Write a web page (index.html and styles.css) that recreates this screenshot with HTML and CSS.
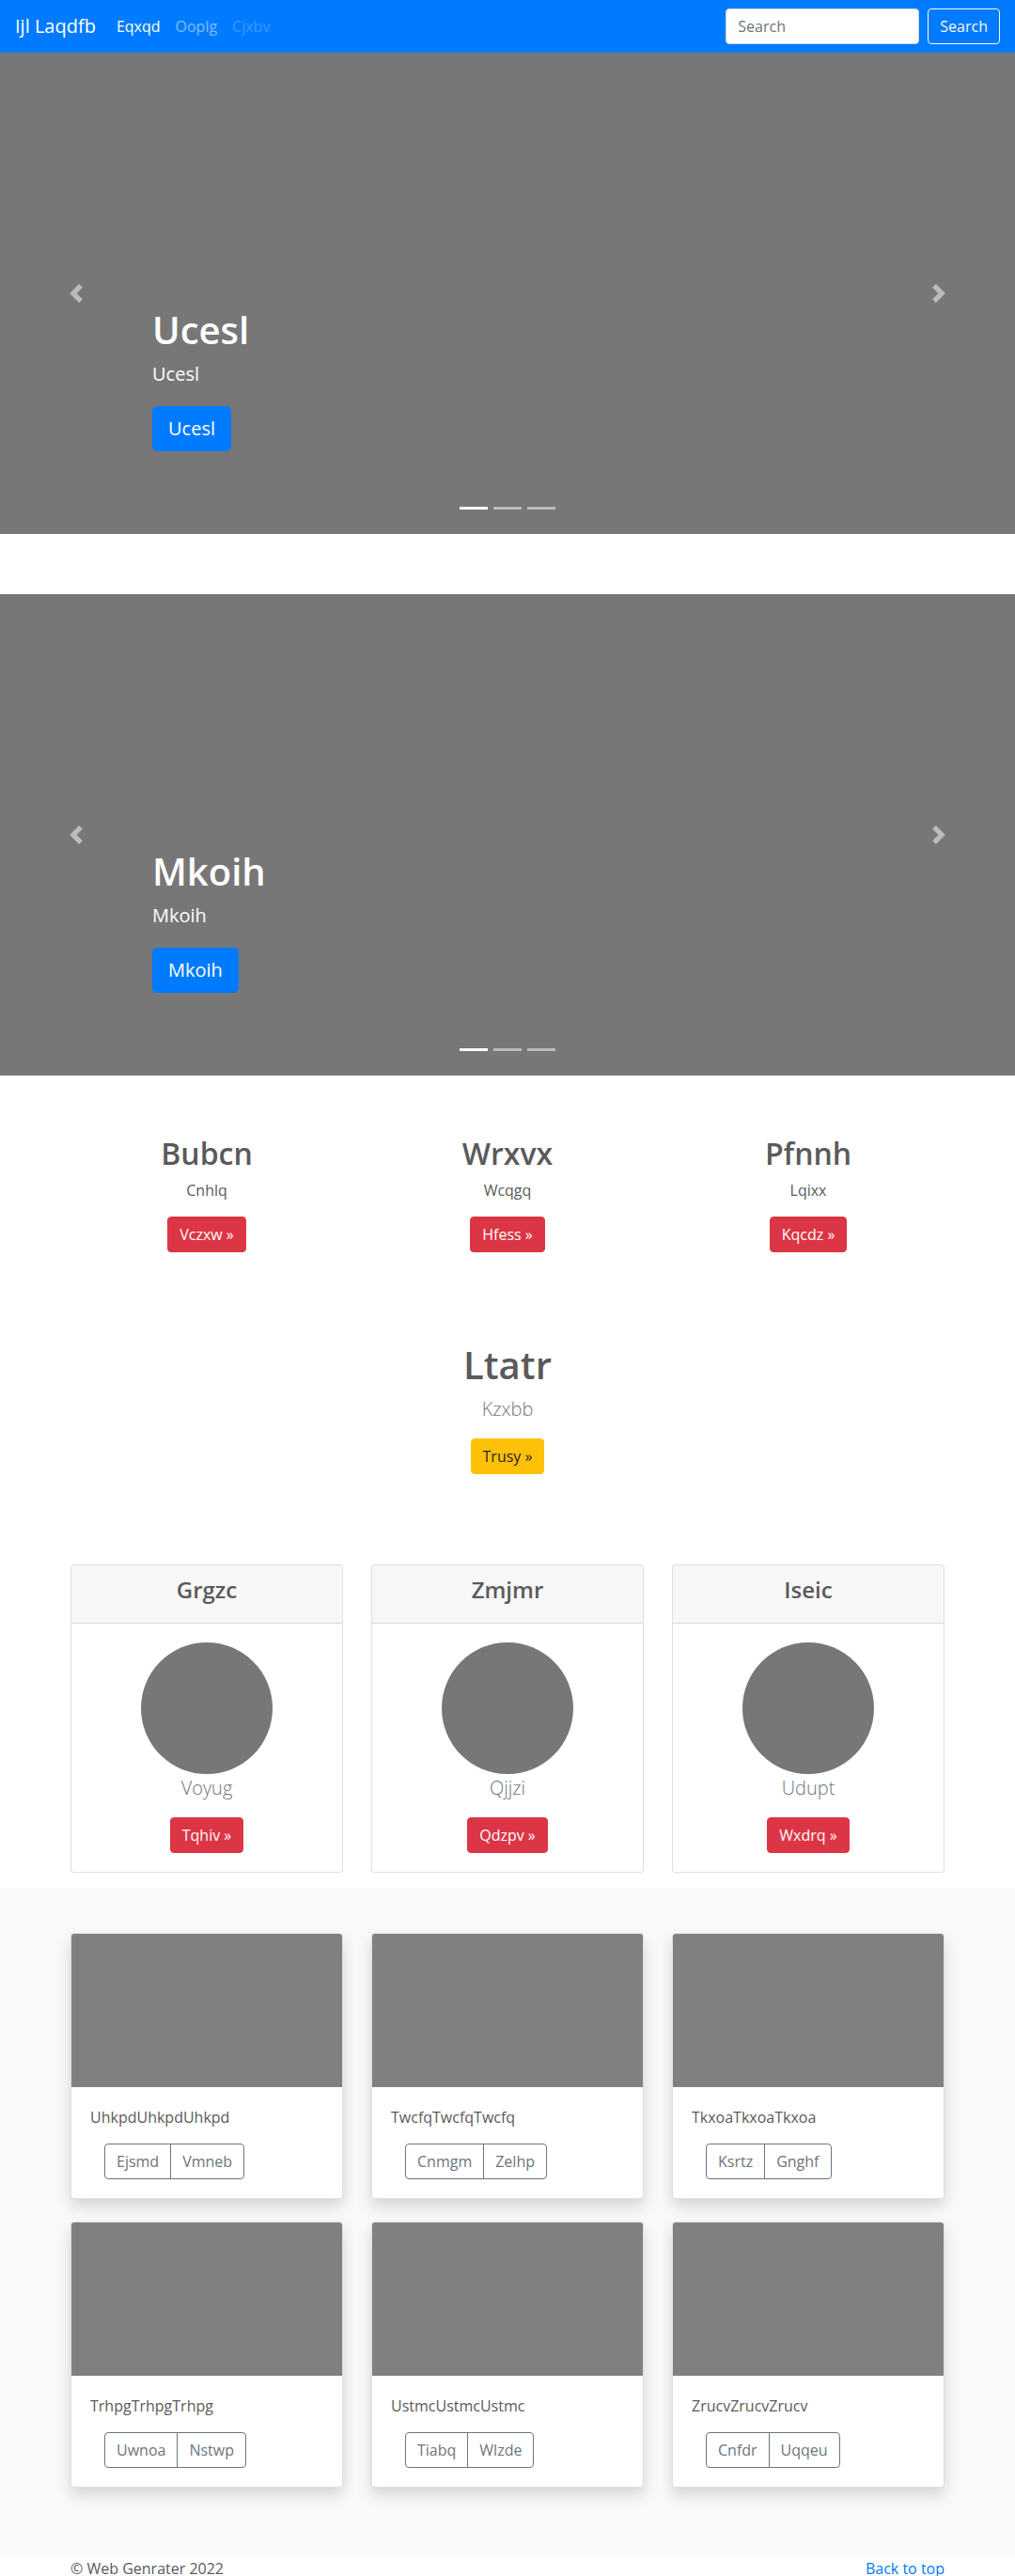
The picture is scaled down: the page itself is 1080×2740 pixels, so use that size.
FILE: index.html
```html
<!DOCTYPE html>
<html lang="en">
<head>
<meta charset="utf-8">
<title>Ijl Laqdfb</title>
<link rel="stylesheet" href="styles.css">
</head>
<body>
<nav class="navbar">
  <a class="brand" href="#">Ijl Laqdfb</a>
  <ul class="nav">
    <li><a class="nav-link active" href="#">Eqxqd</a></li>
    <li><a class="nav-link" href="#">Ooplg</a></li>
    <li><a class="nav-link disabled" href="#">Cjxbv</a></li>
  </ul>
  <form class="search">
    <input class="search-input" type="text" placeholder="Search">
    <button class="btn btn-outline-light" type="button">Search</button>
  </form>
</nav>

<div class="carousel">
  <div class="caption">
    <h1>Ucesl</h1>
    <p>Ucesl</p>
    <a class="btn btn-lg btn-primary" href="#">Ucesl</a>
  </div>
  <a class="ctrl prev" href="#"><svg width="20" height="20" viewBox="0 0 8 8"><path fill="#fff" d="M5.25 0l-4 4 4 4 1.5-1.5L4.25 4l2.5-2.5L5.25 0z"/></svg></a>
  <a class="ctrl next" href="#"><svg width="20" height="20" viewBox="0 0 8 8"><path fill="#fff" d="M2.75 0l-1.5 1.5L3.75 4l-2.5 2.5L2.75 8l4-4-4-4z"/></svg></a>
  <ol class="indicators"><li class="active"></li><li></li><li></li></ol>
</div>

<div class="carousel">
  <div class="caption">
    <h1>Mkoih</h1>
    <p>Mkoih</p>
    <a class="btn btn-lg btn-primary" href="#">Mkoih</a>
  </div>
  <a class="ctrl prev" href="#"><svg width="20" height="20" viewBox="0 0 8 8"><path fill="#fff" d="M5.25 0l-4 4 4 4 1.5-1.5L4.25 4l2.5-2.5L5.25 0z"/></svg></a>
  <a class="ctrl next" href="#"><svg width="20" height="20" viewBox="0 0 8 8"><path fill="#fff" d="M2.75 0l-1.5 1.5L3.75 4l-2.5 2.5L2.75 8l4-4-4-4z"/></svg></a>
  <ol class="indicators"><li class="active"></li><li></li><li></li></ol>
</div>

<div class="container">
  <div class="marketing">
    <div class="mcol">
      <h2>Bubcn</h2>
      <p>Cnhlq</p>
      <div class="btn-wrap"><a class="btn btn-danger" href="#">Vczxw &raquo;</a></div>
    </div>
    <div class="mcol">
      <h2>Wrxvx</h2>
      <p>Wcqgq</p>
      <div class="btn-wrap"><a class="btn btn-danger" href="#">Hfess &raquo;</a></div>
    </div>
    <div class="mcol">
      <h2>Pfnnh</h2>
      <p>Lqixx</p>
      <div class="btn-wrap"><a class="btn btn-danger" href="#">Kqcdz &raquo;</a></div>
    </div>
  </div>
</div>

<section class="hero">
  <h1>Ltatr</h1>
  <p class="lead text-muted">Kzxbb</p>
  <div class="btn-row"><a class="btn btn-warning" href="#">Trusy &raquo;</a></div>
</section>

<div class="container">
  <div class="deck">
    <div class="card pcard">
      <div class="card-header"><h4>Grgzc</h4></div>
      <div class="card-body">
        <div class="circle"></div>
        <p class="lead text-muted">Voyug</p>
        <a class="btn btn-danger" href="#">Tqhiv &raquo;</a>
      </div>
    </div>
    <div class="card pcard">
      <div class="card-header"><h4>Zmjmr</h4></div>
      <div class="card-body">
        <div class="circle"></div>
        <p class="lead text-muted">Qjjzi</p>
        <a class="btn btn-danger" href="#">Qdzpv &raquo;</a>
      </div>
    </div>
    <div class="card pcard">
      <div class="card-header"><h4>Iseic</h4></div>
      <div class="card-body">
        <div class="circle"></div>
        <p class="lead text-muted">Udupt</p>
        <a class="btn btn-danger" href="#">Wxdrq &raquo;</a>
      </div>
    </div>
  </div>
</div>

<section class="album">
  <div class="container">
    <div class="album-grid">
      <div class="card acard">
        <div class="thumb"></div>
        <div class="acard-body">
          <p class="card-text">UhkpdUhkpdUhkpd</p>
          <div class="btn-group"><a class="btn btn-outline-secondary" href="#">Ejsmd</a><a class="btn btn-outline-secondary" href="#">Vmneb</a></div>
        </div>
      </div>
      <div class="card acard">
        <div class="thumb"></div>
        <div class="acard-body">
          <p class="card-text">TwcfqTwcfqTwcfq</p>
          <div class="btn-group"><a class="btn btn-outline-secondary" href="#">Cnmgm</a><a class="btn btn-outline-secondary" href="#">Zelhp</a></div>
        </div>
      </div>
      <div class="card acard">
        <div class="thumb"></div>
        <div class="acard-body">
          <p class="card-text">TkxoaTkxoaTkxoa</p>
          <div class="btn-group"><a class="btn btn-outline-secondary" href="#">Ksrtz</a><a class="btn btn-outline-secondary" href="#">Gnghf</a></div>
        </div>
      </div>
      <div class="card acard">
        <div class="thumb"></div>
        <div class="acard-body">
          <p class="card-text">TrhpgTrhpgTrhpg</p>
          <div class="btn-group"><a class="btn btn-outline-secondary" href="#">Uwnoa</a><a class="btn btn-outline-secondary" href="#">Nstwp</a></div>
        </div>
      </div>
      <div class="card acard">
        <div class="thumb"></div>
        <div class="acard-body">
          <p class="card-text">UstmcUstmcUstmc</p>
          <div class="btn-group"><a class="btn btn-outline-secondary" href="#">Tiabq</a><a class="btn btn-outline-secondary" href="#">Wlzde</a></div>
        </div>
      </div>
      <div class="card acard">
        <div class="thumb"></div>
        <div class="acard-body">
          <p class="card-text">ZrucvZrucvZrucv</p>
          <div class="btn-group"><a class="btn btn-outline-secondary" href="#">Cnfdr</a><a class="btn btn-outline-secondary" href="#">Uqqeu</a></div>
        </div>
      </div>
    </div>
  </div>
</section>

<footer class="container footer">
  <p>&copy; Web Genrater 2022</p>
  <a href="#" class="top-link">Back to top</a>
</footer>
</body>
</html>
```

FILE: styles.css
```css
* { box-sizing: border-box; }

html, body {
  margin: 0;
  padding: 0;
}

body {
  font-family: "Open Sans", "Noto Sans", sans-serif;
  font-size: 16px;
  line-height: 1.5;
  color: #5a5a5a;
  background: #fff;
}

a { text-decoration: none; }

h1, h2, h4, p { margin: 0; }

/* Navbar */
.navbar {
  height: 56px;
  background: #007bff;
  display: flex;
  align-items: center;
  padding: 0 16px;
}

.brand {
  font-size: 20px;
  line-height: 30px;
  color: #fff;
  margin-right: 14px;
}

.nav {
  display: flex;
  list-style: none;
  margin: 0;
  padding: 0;
  flex: 1;
}

.nav-link {
  display: block;
  padding: 8px;
  color: rgba(255, 255, 255, 0.5);
}

.nav-link.active { color: #fff; }
.nav-link.disabled { color: rgba(255, 255, 255, 0.25); }

.search {
  display: flex;
  align-items: center;
}

.search-input {
  width: 206px;
  height: 38px;
  padding: 6px 12px;
  font-family: inherit;
  font-size: 16px;
  color: #495057;
  background: #fff;
  border: 1px solid #ced4da;
  border-radius: 4px;
  margin-right: 9px;
  outline: none;
}

.search-input::placeholder { color: #6c757d; }

/* Buttons */
.btn {
  display: inline-block;
  font-family: inherit;
  font-size: 16px;
  line-height: 24px;
  padding: 6px 12px;
  border: 1px solid transparent;
  border-radius: 4px;
  cursor: pointer;
  text-align: center;
}

.btn-lg {
  font-size: 20px;
  line-height: 30px;
  padding: 8px 16px;
  border-radius: 5px;
}

.btn-primary { background: #007bff; border-color: #007bff; color: #fff; }
.btn-danger { background: #dc3545; border-color: #dc3545; color: #fff; }
.btn-warning { background: #ffc107; border-color: #ffc107; color: #212529; }
.btn-outline-light { background: transparent; border-color: #f8f9fa; color: #f8f9fa; }
.btn-outline-secondary { background: transparent; border-color: #6c757d; color: #6c757d; }

/* Carousel */
.carousel {
  position: relative;
  height: 512px;
  background: #777;
  margin-bottom: 64px;
  overflow: hidden;
}

.caption {
  position: absolute;
  left: 15%;
  right: 15%;
  bottom: 88px;
  color: #fff;
  display: flex;
  flex-direction: column;
  align-items: flex-start;
}

.caption h1 {
  font-size: 40px;
  line-height: 48px;
  font-weight: 600;
  margin-bottom: 8px;
}

.caption p {
  font-size: 20px;
  line-height: 30px;
  margin-bottom: 19px;
}

.ctrl {
  position: absolute;
  top: 0;
  bottom: 0;
  width: 15%;
  display: flex;
  align-items: center;
  justify-content: center;
  opacity: 0.5;
}

.ctrl.prev { left: 0; }
.ctrl.next { right: 0; }

.indicators {
  position: absolute;
  left: 15%;
  right: 15%;
  bottom: 16px;
  margin: 0;
  padding: 0;
  list-style: none;
  display: flex;
  justify-content: center;
}

.indicators li {
  width: 30px;
  height: 23px;
  margin: 0 3px;
  border-top: 10px solid transparent;
  border-bottom: 10px solid transparent;
  background: #fff;
  background-clip: padding-box;
  opacity: 0.5;
}

.indicators li.active { opacity: 1; }

/* Container */
.container {
  width: 930px;
  margin: 0 auto;
}

/* Marketing */
.marketing {
  display: grid;
  grid-template-columns: repeat(3, 1fr);
  column-gap: 30px;
}

.mcol {
  text-align: center;
  margin-bottom: 24px;
}

.mcol h2 {
  font-size: 32px;
  line-height: 38.4px;
  font-weight: 600;
  margin-bottom: 8px;
}

.mcol p {
  margin: 0 12px 16px;
}

.btn-wrap {
  margin-bottom: 16px;
}

/* Hero */
.hero {
  text-align: center;
  padding: 56px 0 96px;
}

.hero h1 {
  font-size: 40px;
  line-height: 48px;
  font-weight: 600;
  margin-bottom: 8px;
}

.lead {
  font-size: 20px;
  line-height: 30px;
  font-weight: 300;
  margin-bottom: 16px;
}

.text-muted { color: #6c757d; }

/* Cards */
.card {
  background: #fff;
  border: 1px solid rgba(0, 0, 0, 0.125);
  border-radius: 4px;
}

.deck {
  display: grid;
  grid-template-columns: repeat(3, 1fr);
  column-gap: 30px;
  margin-bottom: 16px;
}

.pcard { text-align: center; }

.card-header {
  background: rgba(0, 0, 0, 0.03);
  border-bottom: 1px solid rgba(0, 0, 0, 0.125);
  padding: 12px 20px;
  border-radius: 3px 3px 0 0;
}

.card-header h4 {
  font-size: 24px;
  line-height: 28.8px;
  font-weight: 600;
  margin-bottom: 8px;
}

.card-body {
  padding: 20px;
}

.circle {
  width: 140px;
  height: 140px;
  border-radius: 50%;
  background: #777;
  margin: 0 auto;
}

/* Album */
.album {
  background: #f8f9fa;
  padding: 48px 0 72px;
}

.album-grid {
  display: grid;
  grid-template-columns: repeat(3, 1fr);
  column-gap: 30px;
  row-gap: 24px;
}

.acard {
  overflow: hidden;
  box-shadow: 0 8px 16px rgba(0, 0, 0, 0.15);
}

.thumb {
  height: 163px;
  background: #808080;
}

.acard-body {
  padding: 20px;
}

.card-text {
  margin-bottom: 16px;
}

.btn-group {
  display: inline-flex;
  margin-left: 15px;
}

.btn-group .btn:first-child {
  border-top-right-radius: 0;
  border-bottom-right-radius: 0;
}

.btn-group .btn + .btn {
  margin-left: -1px;
  border-top-left-radius: 0;
  border-bottom-left-radius: 0;
}

/* Footer */
.footer {
  display: flex;
  justify-content: space-between;
  padding-top: 2px;
}

.top-link { color: #007bff; }
```
